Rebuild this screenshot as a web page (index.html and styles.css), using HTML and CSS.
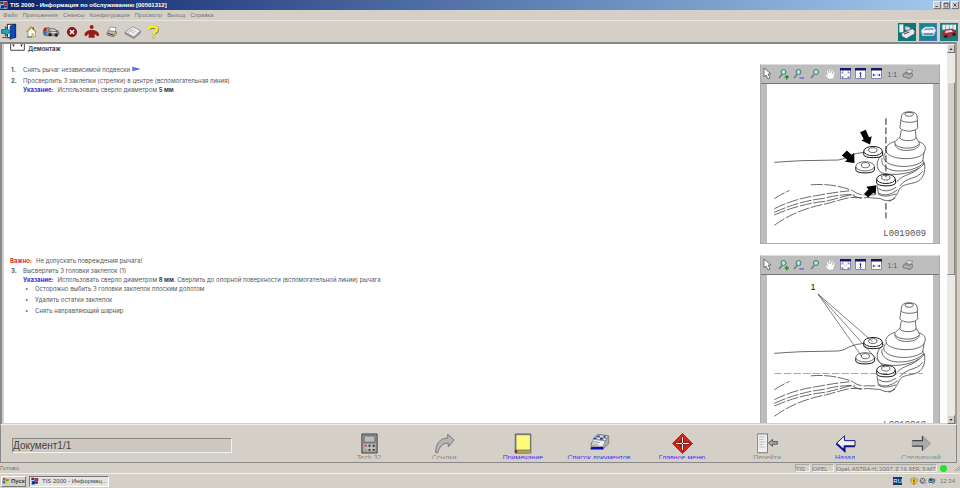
FILE: index.html
```html
<!DOCTYPE html>
<html lang="ru">
<head>
<meta charset="utf-8">
<title>TIS 2000 - Информация по обслуживанию</title>
<link rel="stylesheet" href="styles.css">
</head>
<body>
<svg class="defs" aria-hidden="true">
  <symbol id="arm" viewBox="33 72 501 477">
    <g fill="none" stroke="#444" stroke-width="2.4" stroke-linejoin="round">
      <path d="M439 167 C439 150 486 150 486 167 L488 203 C480 216 443 216 434 203Z" fill="#fff"/>
      <ellipse cx="462" cy="162" rx="13" ry="6"/>
      <path d="M438 180 C447 188 477 188 487 181 M438 210 L434 234 C442 244 475 244 483 234 L481 210"/>
      <path d="M432 232 L419 245 C417 263 432 272 457 271 C485 270 496 258 492 246 L483 232"/>
      <path d="M420 252 C432 268 480 268 491 253 M419 244 C400 249 388 261 393 275 C402 300 489 304 506 279 C518 260 506 250 492 245"/>
      <path d="M393 276 C386 282 383 292 388 300 C406 326 484 325 503 302 L507 277 M383 280 C364 300 358 320 377 338 C410 349 478 344 506 313 L503 300"/>
      <path d="M380 295 C376 312 390 327 416 332 C450 337 489 326 504 310 M508 307 C513 337 504 360 480 368 C450 375 441 375 432 389 C421 414 413 420 401 425 M503 334 C484 360 456 349 434 378 M492 323 C475 345 447 340 424 366"/>
      <path d="M55 307 Q96 304 138 302 L248 300 Q267 298 282 287 Q304 278 326 277"/>
      <path d="M165 375 Q229 369 291 392 Q311 408 332 405 L362 405 M55 447 Q115 417 180 408 Q237 397 282 393 M55 458 Q130 424 203 416 Q255 402 298 405 M55 466 Q132 432 213 424 L284 405 L318 416 M55 497 Q123 448 213 432 Q266 416 286 413 L332 414 M55 417 Q77 402 101 392" stroke-dasharray="36 5"/>
      <path d="M365 376 L369 400 Q394 415 427 390 M369 386 Q393 402 423 382 M367 402 Q386 416 423 402 M332 413 L374 416 Q398 430 420 415"/>
      <g fill="#fff">
        <path d="M325 274v10c0 12 57 12 57 0v-10" stroke="#111" stroke-width="3"/><ellipse cx="353" cy="273" rx="28" ry="14" stroke="#222" stroke-width="3"/><path d="M340 267v6c4 6 21 6 25 0v-6c-4-6-21-6-25 0Z"/>
        <path d="M301 320v10c0 12 56 12 56 0v-10" stroke="#111" stroke-width="3"/><ellipse cx="329" cy="319" rx="28" ry="14"/><path d="M318 312v7c4 6 20 6 24 0v-7c-4-6-20-6-24 0Z"/>
        <path d="M364 358v11c0 12 57 12 57 0v-11" stroke="#111" stroke-width="3"/><ellipse cx="392" cy="357" rx="28" ry="14" stroke="#222" stroke-width="3"/><path d="M379 350v6c4 6 21 6 25 0v-6c-4-6-21-6-25 0Z"/>
      </g>
    </g>
  </symbol>
  <symbol id="pointer" viewBox="0 0 12 12"><path d="M2 0v9l2-2 2 4 2-1-2-4h3Z" fill="#fff" stroke="#555" stroke-width=".8"/></symbol>
  <symbol id="lens" viewBox="0 0 12 12"><path d="M5 6.500 2 10" stroke="#777" stroke-width="1.400"/><circle cx="7" cy="4" r="2.500" fill="#b8e2df" stroke="#397a78"/></symbol>
  <symbol id="lens-in" viewBox="0 0 12 12"><path d="M4 6.500 1 10" stroke="#777" stroke-width="1.400"/><circle cx="5.500" cy="4" r="2.500" fill="#b8e2df" stroke="#397a78"/><path d="M6.500 9h4.500M8.800 7v4.500" stroke="#080" stroke-width="1.200"/></symbol>
  <symbol id="lens-out" viewBox="0 0 12 12"><path d="M4 6.500 1 10" stroke="#777" stroke-width="1.400"/><circle cx="5.500" cy="4" r="2.500" fill="#b8e2df" stroke="#397a78"/><path d="M6.500 10h4.500" stroke="#55f" stroke-width="1.200"/></symbol>
  <symbol id="hand" viewBox="0 0 12 12"><path d="M4.500 11 1 7c0-2 1.500-1 2.500.500L2.500 3c0-1.500 1.300-1.300 1.600 0L5 5V1.500C5 .2 6.600.200 6.600 1.500V5L7.500 2c.400-1.200 1.700-.8 1.400.500L8.500 6l1-2.500c.500-1 1.700-.5 1.400.600L10 9 9 11Z" fill="#fff" stroke="#999" stroke-width=".4"/></symbol>
  <symbol id="fit-all" viewBox="0 0 12 12"><path d="M.5.500h10v10H.5Z" fill="#fff" stroke="#8888b8"/><path d="M0 0h11v2.500H0Z" fill="#16166b"/><path d="m3 5 5 4M8 5 3 9" stroke="#dde"/><path d="M2 5.500V4h1.500M7.500 4H9v1.500M2 8v1.500h1.500M7.500 9.500H9V8" stroke="#556" stroke-width=".8" fill="none"/></symbol>
  <symbol id="fit-height" viewBox="0 0 12 12"><path d="M.5.500h10v10H.5Z" fill="#fff" stroke="#8888b8"/><path d="M0 0h11v2.500H0Z" fill="#16166b"/><path d="M4 5.500 5.500 4 7 5.500ZM4 8.500 5.500 10 7 8.500ZM5 5h1v4H5Z" fill="#33a"/></symbol>
  <symbol id="fit-width" viewBox="0 0 12 12"><path d="M.5.500h10v10H.5Z" fill="#fff" stroke="#8888b8"/><path d="M0 0h11v2.500H0Z" fill="#16166b"/><path d="M3 5.500 1.500 7 3 8.500ZM8 5.500 9.500 7 8 8.500ZM3 6.600h1.500v.8H3ZM6.500 6.600H8v.8H6.500Z" fill="#33a"/></symbol>
  <symbol id="print" viewBox="0 0 12 12"><path d="m4 5 1.500-3.500 5 .5-1.500 4" fill="#ddd" stroke="#777" stroke-width=".7"/><path d="m1 6.500 2-2 7.500 1v2.500L8 10.500 1 8.500Z" fill="#999" stroke="#666" stroke-width=".7"/><path d="m2 7.500 6 1 2-2" stroke="#ddd" stroke-width=".7" fill="none"/></symbol>
  <symbol id="app" viewBox="0 0 24 24"><path d="M1 1h21v22H1Z" fill="#e8e8ef"/><path d="M1 2h8v7H1Z" fill="#345"/><path d="M10 3h12v9H10Z" fill="#a34"/><path d="M2 11h9v12H2Z" fill="#18c"/><path d="M9 13h12v7H9Z" fill="#336"/><path d="m3 15 6-2 2 8-7 1Z" fill="#02b"/></symbol>
</svg>

<header class="titlebar">
  <svg class="app-icon" aria-hidden="true"><use href="#app"/></svg>
  <h1>TIS 2000 - Информация по обслуживанию [00501312]</h1>
  <div class="window-buttons">
    <button type="button" aria-label="Свернуть"><svg viewBox="0 0 8 8"><path d="M2 6h3" stroke="#222"/></svg></button>
    <button type="button" aria-label="Развернуть"><svg viewBox="0 0 8 8"><path d="M1.500 1.500h5v5h-5ZM1 2h6" fill="none" stroke="#333" stroke-width=".8"/></svg></button>
    <button type="button" aria-label="Закрыть"><svg viewBox="0 0 8 8"><path d="m2 2 4 4M6 2 2 6" stroke="#222"/></svg></button>
  </div>
</header>

<nav class="menu">
  <button type="button">Файл</button><button type="button">Приложения</button><button type="button">Сеансы</button><button type="button">Конфигурация</button><button type="button">Просмотр</button><button type="button">Выход</button><button type="button">Справка</button>
</nav>

<div class="toolbar">
  <button type="button" aria-label="Выйти"><svg viewBox="0 65 60 54"><path d="M22 69h25v40H22Z" fill="#fff" stroke="#222" stroke-width="3"/><path d="m30 75 16-7v39l-16 7Z" fill="#124bb8" stroke="#062368" stroke-width="2"/><path d="M5 85h11v-9l15 15-15 14v-9H5Z" fill="#23a9bd" stroke="#126" stroke-width="2"/><path d="M7 109h22" stroke="#555" stroke-width="3"/></svg></button>
  <span class="tool-gap"></span>
  <button type="button" aria-label="Начало"><svg viewBox="66 65 60 54"><path d="M84 91v15h22V90L94 79Z" fill="#fff" stroke="#777" stroke-width="2"/><path d="m79 92 15-15 14 15" fill="none" stroke="#b39a35" stroke-width="4"/><path d="M100 78v7" stroke="#944" stroke-width="4"/><path d="M94 95h7v11h-7Z" fill="#db4"/><path d="M81 107h15" stroke="#383" stroke-width="3"/></svg></button>
  <button type="button" aria-label="Автомобиль"><svg viewBox="126 65 60 54"><path d="m130 93 4-12 13-2 7 8 20 1 3 9-5 6h-38Z" fill="#999" stroke="#444" stroke-width="2"/><path d="M131 82q3-6 8-2v9h-9Z" fill="#b22"/><path d="m129 89 11 1v10h-10Z" fill="#37b"/><path d="m145 89 7-7 13 1 6 8Z" fill="#ddd" stroke="#333" stroke-width="2"/><circle cx="150" cy="100" r="5" fill="#222"/><circle cx="169" cy="101" r="5" fill="#222"/><path d="M154 93h15" stroke="#eee" stroke-width="3"/></svg></button>
  <button type="button" aria-label="Отмена"><svg viewBox="186 65 60 54"><circle cx="216" cy="92" r="14" fill="#981313" stroke="#5b0808" stroke-width="2"/><path d="m210 86 12 12m0-12-12 12" stroke="#fff" stroke-width="5"/></svg></button>
  <button type="button" aria-label="Клиент"><svg viewBox="246 65 60 54"><circle cx="275" cy="77" r="6" fill="#991d16"/><path d="M253 102c2-12 10-16 22-16s21 4 23 16l-6 3-8-8v12h-18V97l-8 8Z" fill="#991d16"/></svg></button>
  <button type="button" aria-label="Печать"><svg viewBox="306 65 60 54"><path d="m325 90 6-13 17 2-3 15" fill="#fff" stroke="#777" stroke-width="2"/><path d="m321 93 6-5 22 3v8l-9 7-19-5Z" fill="#bbb" stroke="#555" stroke-width="2"/><path d="m324 96 16 5 8-6" fill="none" stroke="#333" stroke-width="3"/><path d="m342 100 6-4" stroke="#c9c521" stroke-width="4"/></svg></button>
  <button type="button" aria-label="Книга"><svg viewBox="366 65 60 54"><path d="m375 93 23-17 24 12-20 20Z" fill="#eee" stroke="#777" stroke-width="2"/><path d="m375 93 27 14 20-18v6l-20 17-27-14Z" fill="#999" stroke="#666"/><path d="m388 88 16 8m-11-12 16 8M384 94l14-10" stroke="#aaa" stroke-width="2"/></svg></button>
  <button type="button" aria-label="Помощь"><svg viewBox="426 65 60 54"><path d="M449 84c0-9 23-9 23 1 0 7-9 8-10 14" fill="none" stroke="#777" stroke-width="10"/><path d="M447 83c0-10 24-10 24 1 0 7-10 8-10 15" fill="none" stroke="#fff200" stroke-width="8"/><circle cx="461" cy="108" r="4" fill="#fff200" stroke="#777"/></svg></button>
  <div class="modes">
    <button type="button" aria-label="Детали"><svg viewBox="114 65 54 54"><path d="M114 65h54v54h-54Z" fill="#087b78"/><path d="M118 69h12v24h-12Z" fill="#eee"/><path d="m135 74 13 2 7 10-9 5-12-7Z" fill="#ccd" stroke="#244"/><path d="m124 96 18-7 15-7 8 7-2 9-24 14-14-7Z" fill="#e8e8ed" stroke="#445" stroke-width="2"/><path d="m132 98 16-6" stroke="#556" stroke-width="4"/></svg></button>
    <button type="button" aria-label="Обслуживание"><svg viewBox="177 65 54 54"><path d="M177 65h54v54h-54Z" fill="#4a78b8"/><path d="M180 68h48v48h-48Z" fill="#1b8494"/><path d="m184 87 11-9 26-1 6 10-6 14-33 2Z" fill="#eef" stroke="#cde" stroke-width="2"/><path d="m196 81 23-1 3 6-31 1Z" fill="#89a9bd"/><path d="M184 94h41l-4 10h-31Z" fill="#a9cbd9"/><path d="M188 91h32" stroke="#fff" stroke-width="4"/><path d="M192 98h27" stroke="#456" stroke-width="3"/></svg></button>
    <button type="button" aria-label="Ремонт"><svg viewBox="240 65 54 54"><path d="M240 65h54v54h-54Z" fill="#187d7b"/><path d="M247 70h41v15h-41Z" fill="#eee"/><path d="M257 70v14M268 70v14M279 70v14" stroke="#789" stroke-width="2"/><path d="m245 96 12-11 20-2 13 9-2 10-29 8-14-7Z" fill="#a52d3d" stroke="#555" stroke-width="2"/><path d="m257 88 17-2 5 5-24 4Z" fill="#dde"/><circle cx="257" cy="105" r="5" fill="#222"/><circle cx="282" cy="99" r="5" fill="#222"/></svg></button>
  </div>
</div>

<main class="viewer">
  <article class="document">
    <h2><svg viewBox="0 0 46 21" aria-hidden="true"><path d="M2 0v19h42V0" fill="none" stroke="#444" stroke-width="3"/><path d="m7 0 7 2-3 7ZM39 0l-7 2 3 7Z" fill="#222"/></svg>Демонтаж</h2>
    <section class="block">
      <ol class="steps">
        <li>Снять рычаг независимой подвески <a href="#arm" aria-label="Перейти к рычагу"><svg viewBox="0 0 27 18"><path d="M1 2 26 9 1 16Z" fill="#4d5ff5"/><path d="m3 6 6 4" stroke="#aab" stroke-width="2"/></svg></a></li>
        <li>Просверлить 3 заклепки (стрелки) в центре (вспомогательная линия)
          <p><b class="note">Указание:</b>Использовать сверло диаметром <b>5 мм</b></p></li>
      </ol>
      <figure class="figure">
        <div class="figure-tools">
          <button type="button" aria-label="Выбор"><svg><use href="#pointer"/></svg></button><button type="button" aria-label="Увеличить"><svg><use href="#lens-in"/></svg></button><button type="button" aria-label="Уменьшить"><svg><use href="#lens-out"/></svg></button><button type="button" aria-label="Лупа"><svg><use href="#lens"/></svg></button><button type="button" aria-label="Переместить"><svg><use href="#hand"/></svg></button><button type="button" aria-label="По размеру окна"><svg><use href="#fit-all"/></svg></button><button type="button" aria-label="По высоте"><svg><use href="#fit-height"/></svg></button><button type="button" aria-label="По ширине"><svg><use href="#fit-width"/></svg></button><button type="button">1:1</button><button type="button" aria-label="Печать рисунка"><svg><use href="#print"/></svg></button>
        </div>
        <svg class="drawing" viewBox="33 72 501 477">
          <use href="#arm" x="33" y="72" width="501" height="477"/>
          <path d="M392 174v178M392 430v46" stroke="#222" stroke-width="3" stroke-dasharray="20 8"/>
          <path d="m314 216 17-7 10 22 8-3-5 25-26-12 7-4Z"/>
          <path d="m259 286 15-15 15 14 7-7 1 31-29-4 7-6ZM326 402l13-13-6-8 30-5-2 29-7-6-16 14Z"/>
          <text x="384" y="528" class="caption">L0019009</text>
        </svg>
      </figure>
    </section>
    <section class="block">
      <div>
        <p class="warning"><b>Важно:</b>Не допускать повреждения рычага!</p>
        <ol class="steps next" start="3">
          <li>Высверлить 3 головки заклепок (1)
            <p><b class="note">Указание:</b>Использовать сверло диаметром <b>8 мм</b>. Сверлить до опорной поверхности (вспомогательной линии) рычага</p>
            <ul><li>Осторожно выбить 3 головки заклепок плоским долотом</li><li>Удалить остатки заклепок</li><li>Снять направляющий шарнир</li></ul>
          </li>
        </ol>
      </div>
      <figure class="figure">
        <div class="figure-tools">
          <button type="button" aria-label="Выбор"><svg><use href="#pointer"/></svg></button><button type="button" aria-label="Увеличить"><svg><use href="#lens-in"/></svg></button><button type="button" aria-label="Уменьшить"><svg><use href="#lens-out"/></svg></button><button type="button" aria-label="Лупа"><svg><use href="#lens"/></svg></button><button type="button" aria-label="Переместить"><svg><use href="#hand"/></svg></button><button type="button" aria-label="По размеру окна"><svg><use href="#fit-all"/></svg></button><button type="button" aria-label="По высоте"><svg><use href="#fit-height"/></svg></button><button type="button" aria-label="По ширине"><svg><use href="#fit-width"/></svg></button><button type="button">1:1</button><button type="button" aria-label="Печать рисунка"><svg><use href="#print"/></svg></button>
        </div>
        <svg class="drawing" viewBox="33 72 501 477">
          <use href="#arm" x="33" y="72" width="501" height="477"/>
          <path d="M187 128 352 272M187 128 319 316M187 128 387 350" stroke="#444" stroke-width="2"/>
          <path d="M55 368h448" stroke="#777" stroke-width="2" stroke-dasharray="22 7"/>
          <text x="164" y="117" class="callout">1</text>
          <text x="384" y="528" class="caption">L0019010</text>
        </svg>
      </figure>
    </section>
  </article>
  <div class="scrollbar">
    <button type="button" aria-label="Вверх"><svg viewBox="0 0 8 8"><path d="m2 5 2-2 2 2Z"/></svg></button>
    <div class="track"><div class="thumb"></div></div>
    <button type="button" aria-label="Вниз"><svg viewBox="0 0 8 8"><path d="m2 3 2 2 2-2Z"/></svg></button>
  </div>
</main>

<footer class="navigator">
  <input type="text" value="Документ1/1" aria-label="Документ" readonly>
  <nav class="actions">
    <button type="button" disabled><svg viewBox="0 0 66 66"><path d="M9 3h48v60H9Z" fill="#999" stroke="#444" stroke-width="3"/><path d="M16 9h34v20H16Z" fill="#bbb" stroke="#444" stroke-width="2"/><path d="M15 35h36v22H15Z" fill="#bbb"/><path d="M18 37h6v6h-6Z" fill="#b33"/><path d="M30 37h6v6h-6ZM43 37h6v6h-6ZM30 50h6v6h-6ZM43 50h6v6h-6Z" fill="#333"/><path d="M18 50h6v6h-6Z" fill="#9a2"/></svg><span>Tech 32</span></button>
    <button type="button" disabled><svg viewBox="0 0 66 66"><path d="M5 62C5 34 18 17 43 16V4l20 18-18 22V32C27 31 16 44 12 62Z" fill="#b5b5b5" stroke="#777" stroke-width="3"/></svg><span>Ссылки</span></button>
    <button type="button"><svg viewBox="0 0 66 66"><path d="M7 3h49v60H7Z" fill="#888" stroke="#666" stroke-width="3"/><path d="M11 7h42v45H11Z" fill="#fffb78"/><path d="M12 56h43v6H12Z" fill="#b7ac25"/><path d="M6 54h7v8H6Z" fill="#722"/></svg><span>Примечание</span></button>
    <button type="button"><svg viewBox="0 0 66 66"><path d="m20 11 8-7 34 5v25L45 50 7 45V30h8Z" fill="#aaa" stroke="#666" stroke-width="2"/><path d="m14 18 38 5-8 20-37-4ZM20 11l38 5-6 9-38-5ZM27 5l34 5-5 8-36-6Z" fill="#eee" stroke="#777" stroke-width="2"/><path d="M7 44h38v8H4Z" fill="#0710bb"/><path d="M15 15h9v4h-9ZM35 16h8v5h-8ZM25 8h9v4h-9ZM46 9h6v5h-6Z" fill="#183b9b"/><path d="m13 27 21 3m-23 4 18 2" stroke="#999" stroke-width="3"/></svg><span>Список документов</span></button>
    <button type="button"><svg viewBox="0 0 66 66"><path d="M33 2 64 33 33 64 2 33Z" fill="#ed1c12" stroke="#702020" stroke-width="3"/><circle cx="33" cy="33" r="11" fill="none" stroke="#444" stroke-width="3"/><path d="M33 11v44M11 33h44" stroke="#333" stroke-width="7"/><path d="M33 13v40M13 33h40" stroke="#fff" stroke-width="3"/><path d="m27 27 12 12m0-12L27 39" stroke="#912" stroke-width="3"/></svg><span>Главное меню</span></button>
    <button type="button" disabled><svg viewBox="0 0 66 66"><path d="M1 3h32v59H1Z" fill="#eee" stroke="#777" stroke-width="3"/><path d="M7 12h16M7 20h14M7 28h18M7 36h13M7 44h17" stroke="#bbb" stroke-width="3"/><path d="m36 31 13-11v7h15v8H49v7Z" fill="#aaa" stroke="#555" stroke-width="3"/></svg><span>Перейти</span></button>
    <button type="button"><svg viewBox="0 0 66 66"><path d="m4 33 26-24v15h33v17H30v15Z" fill="#eee" stroke="#101080" stroke-width="3"/><path d="m5 34 25 22V42h32" fill="none" stroke="#0b118b" stroke-width="6"/></svg><span>Назад</span></button>
    <button type="button" disabled><svg viewBox="0 0 66 66"><path d="M62 33 36 9v15H4v17h32v15Z" fill="#aaa" stroke="#999" stroke-width="3"/><path d="M36 10v14H4M4 41h32v14" fill="none" stroke="#444" stroke-width="4"/></svg><span>Следующий</span></button>
  </nav>
</footer>

<div class="status">
  <span class="ready">Готово</span><span class="cell">TIS</span><span class="cell make">OPEL</span><span class="cell car">Opel, ASTRA-H, 2007, Z 16 XER, 5-MT</span><span class="led"></span>
  <svg class="grip" viewBox="0 0 8 8"><path d="m1 8 7-7M4 8l4-4M7 8l1-1" stroke="#888"/></svg>
</div>

<div class="taskbar">
  <button type="button" class="start"><svg viewBox="0 0 24 24"><path d="M3 4q4-3 8 0l-1 7q-4-2-8 0Z" fill="#e43"/><path d="M13 5q4 2 8 0l-1 7q-4 2-8 0Z" fill="#5a3"/><path d="M2 13q4-3 8 0l-1 7q-4-2-8 0Z" fill="#36d"/><path d="M12 14q4 2 8 0l-1 7q-4 2-8 0Z" fill="#fc2"/></svg>Пуск</button>
  <button type="button" class="task"><svg><use href="#app"/></svg>TIS 2000 - Информац...</button>
  <div class="tray">
    <span class="lang">RU</span>
    <svg viewBox="0 0 24 24"><path d="m12 2 10 4c0 9-4 14-10 17C5 20 2 14 2 6Z" fill="#fc2" stroke="#777" stroke-width="2"/><path d="M12 7v8M12 17v3" stroke="#222" stroke-width="3"/></svg>
    <svg viewBox="0 0 24 24"><circle cx="11" cy="11" r="9" fill="#777"/><path d="m5 6 12 9M7 15 16 5" stroke="#ddd" stroke-width="3"/><path d="M14 16h8v6h-8Z" fill="#aac"/></svg>
    <svg viewBox="0 0 24 24"><path d="M3 7h17v9H3Z" fill="#eee" stroke="#358" stroke-width="3"/><path d="M5 4h8v9H5Z" fill="#257"/><circle cx="16" cy="14" r="5" fill="#58b"/><path d="m13 21 7-4" stroke="#d93" stroke-width="4"/></svg>
    <time>12:34</time>
  </div>
</div>
</body>
</html>
```
FILE: styles.css
```css
* { box-sizing: border-box; }
body {
  margin: 0;
  height: 100vh;
  display: flex;
  flex-direction: column;
  overflow: hidden;
  background: #d4d0c8;
  color: #555;
  font: 6px/9px Inter, "Liberation Sans", sans-serif;
}
h1, h2, p, ol, ul, figure { margin: 0; padding: 0; font-size: inherit; }
button, input { font: inherit; color: inherit; }
button { padding: 0; border: 0; background: none; white-space: nowrap; }
svg { display: block; }
.defs { position: absolute; width: 0; height: 0; }

.titlebar {
  flex: none;
  height: 10px;
  display: flex;
  align-items: center;
  gap: 2px;
  background: linear-gradient(90deg, #0a246a, #a6caf0);
  color: #fff;
  font: bold 6px/9px "Liberation Sans", sans-serif;
}
.app-icon { width: 8px; height: 8px; }
.window-buttons { margin-left: auto; display: flex; gap: 1px; padding-right: 1px; }
.window-buttons button { width: 8px; height: 8px; background: #d4d0c8; border: 1px solid #eee; border-right-color: #777; border-bottom-color: #777; }
.window-buttons svg { width: 6px; height: 6px; }

.menu { flex: none; height: 10px; display: flex; gap: 5px; padding-left: 3px; color: #777; font: 6px/9px "Liberation Sans", sans-serif; }
.toolbar { flex: none; height: 22px; display: flex; align-items: center; border-top: 1px solid #e8e5df; }
.toolbar svg { width: 20px; height: 18px; }
.tool-gap { width: 2px; }
.modes { margin-left: auto; display: flex; gap: 3px; padding-right: 2px; }
.modes svg { width: 18px; height: 18px; }

.viewer {
  flex: 1;
  min-height: 0;
  display: flex;
  margin-right: 3px;
  border: solid #888;
  border-width: 2px 2px 0 2px;
  border-right-color: #a29d96;
}
.document { flex: 1; min-width: 0; overflow: hidden; margin-left: 1px; padding: 0 7px 0 6px; background: #fff; border-left: 1px solid #d4d0c8; border-bottom: 1px solid #d4d0c8; }
.document h2 { display: flex; gap: 3px; height: 20px; color: #444; font-weight: bold; }
.document h2 svg { width: 15px; height: 7px; }
.block { display: grid; grid-template-columns: 1fr 180px; align-items: start; margin-bottom: 11px; }
.steps { padding: 1px 0 0 13px; counter-reset: step; list-style: none; }
.steps.next { counter-reset: step 2; }
.steps > li { margin-bottom: 2px; counter-increment: step; position: relative; }
.steps > li::before { content: counter(step) "."; position: absolute; left: -12px; font-weight: bold; }
.steps a svg { width: 9px; height: 6px; }
.steps a { display: inline-block; }
.steps b { color: #444; }
.steps .note { margin-right: 4px; color: #3b36d8; }
.warning { padding-top: 1px; }
.warning b { margin-right: 4px; color: #e0302c; }
.steps ul { list-style: none; }
.steps ul li { display: flex; margin-bottom: 2px; }
.steps ul li::before { content: "•"; width: 10px; padding-left: 2px; }

.figure { height: 180px; background: #bdbdbd; border: 1px solid #aaa; border-top-color: #ddd; }
.figure-tools { height: 19px; display: flex; align-items: center; justify-content: space-between; padding: 0 25px 0 1px; border-bottom: 1px solid #777; }
.figure-tools button { width: 12px; font: 7px/9px "Liberation Sans", sans-serif; }
.figure-tools svg { width: 12px; height: 12px; }
.drawing { width: 100%; height: 159px; padding: 0 6px; background: #fff; background-clip: content-box; }
.caption { font: 27px "Liberation Mono", monospace; fill: #555; }
.callout { font: 27px "Liberation Sans", sans-serif; fill: #111; }

.scrollbar { width: 8px; display: flex; flex-direction: column; background: #ece9e4; }
.scrollbar button { height: 9px; background: #d4d0c8; border: 1px solid #eee; border-right-color: #777; border-bottom-color: #777; }
.track { flex: 1; padding-top: 29px; }
.thumb { height: 58%; background: #d4d0c8; border: 1px solid #f4f2ee; border-right-color: #888; border-bottom-color: #888; }

.navigator { flex: none; height: 39px; margin-right: 3px; display: flex; align-items: flex-start; border: solid #888; border-width: 1px; border-top-color: #eee; }
.navigator input { width: 220px; height: 15px; margin: 13px 0 0 11px; padding: 0; background: #ccc8c0; border: 1px solid #888; border-right-color: #f4f2ee; border-bottom-color: #f4f2ee; font: 10px "Liberation Sans", sans-serif; color: #444; }
.actions { flex: 1; margin-left: 100px; display: grid; grid-template-columns: 74fr 76fr 82fr 70fr 96fr 74fr 82fr 70fr; height: 34px; padding-top: 8px; overflow: hidden; }
.actions button { display: flex; flex-direction: column; align-items: center; justify-content: flex-start; min-width: 0; color: #3b3bea; font: 7px/8px "Liberation Sans", sans-serif; }
.actions button:disabled { color: #8b8882; }
.actions svg { flex: none; width: 21px; height: 21px; }

.status { flex: none; height: 10px; display: flex; align-items: center; gap: 2px; color: #777; font: 6px/8px Roboto, sans-serif; }
.ready { flex: 1; }
.cell { width: 15px; height: 8px; border: 1px solid #aaa6a0; border-right-color: #eee; border-bottom-color: #eee; line-height: 7px; white-space: nowrap; }
.make { width: 22px; }
.car { width: 101px; }
.led { width: 7px; height: 7px; margin: 0 5px 0 1px; border-radius: 50%; background: #22e322; }
.grip { width: 6px; height: 8px; }

.taskbar { flex: none; height: 15px; display: flex; align-items: center; gap: 3px; padding: 0 2px 0 1px; border-top: 1px solid #f4f2ee; color: #444; font: 6px/9px "Liberation Sans", sans-serif; }
.taskbar svg { flex: none; width: 8px; height: 8px; }
.start, .task { display: flex; align-items: center; gap: 1px; height: 11px; border: 1px solid #fff; border-right-color: #777; border-bottom-color: #777; }
.start { width: 25px; font-weight: bold; }
.task { width: 80px; gap: 3px; padding-left: 1px; background: #e6e4df; border-color: #777 #fff #fff #777; }
.tray { margin-left: auto; display: flex; align-items: center; gap: 1px; color: #777; }
.lang { margin-right: 7px; background: #0a3a7a; color: #fff; line-height: 8px; }
.tray time { margin: 0 3px; }
```
